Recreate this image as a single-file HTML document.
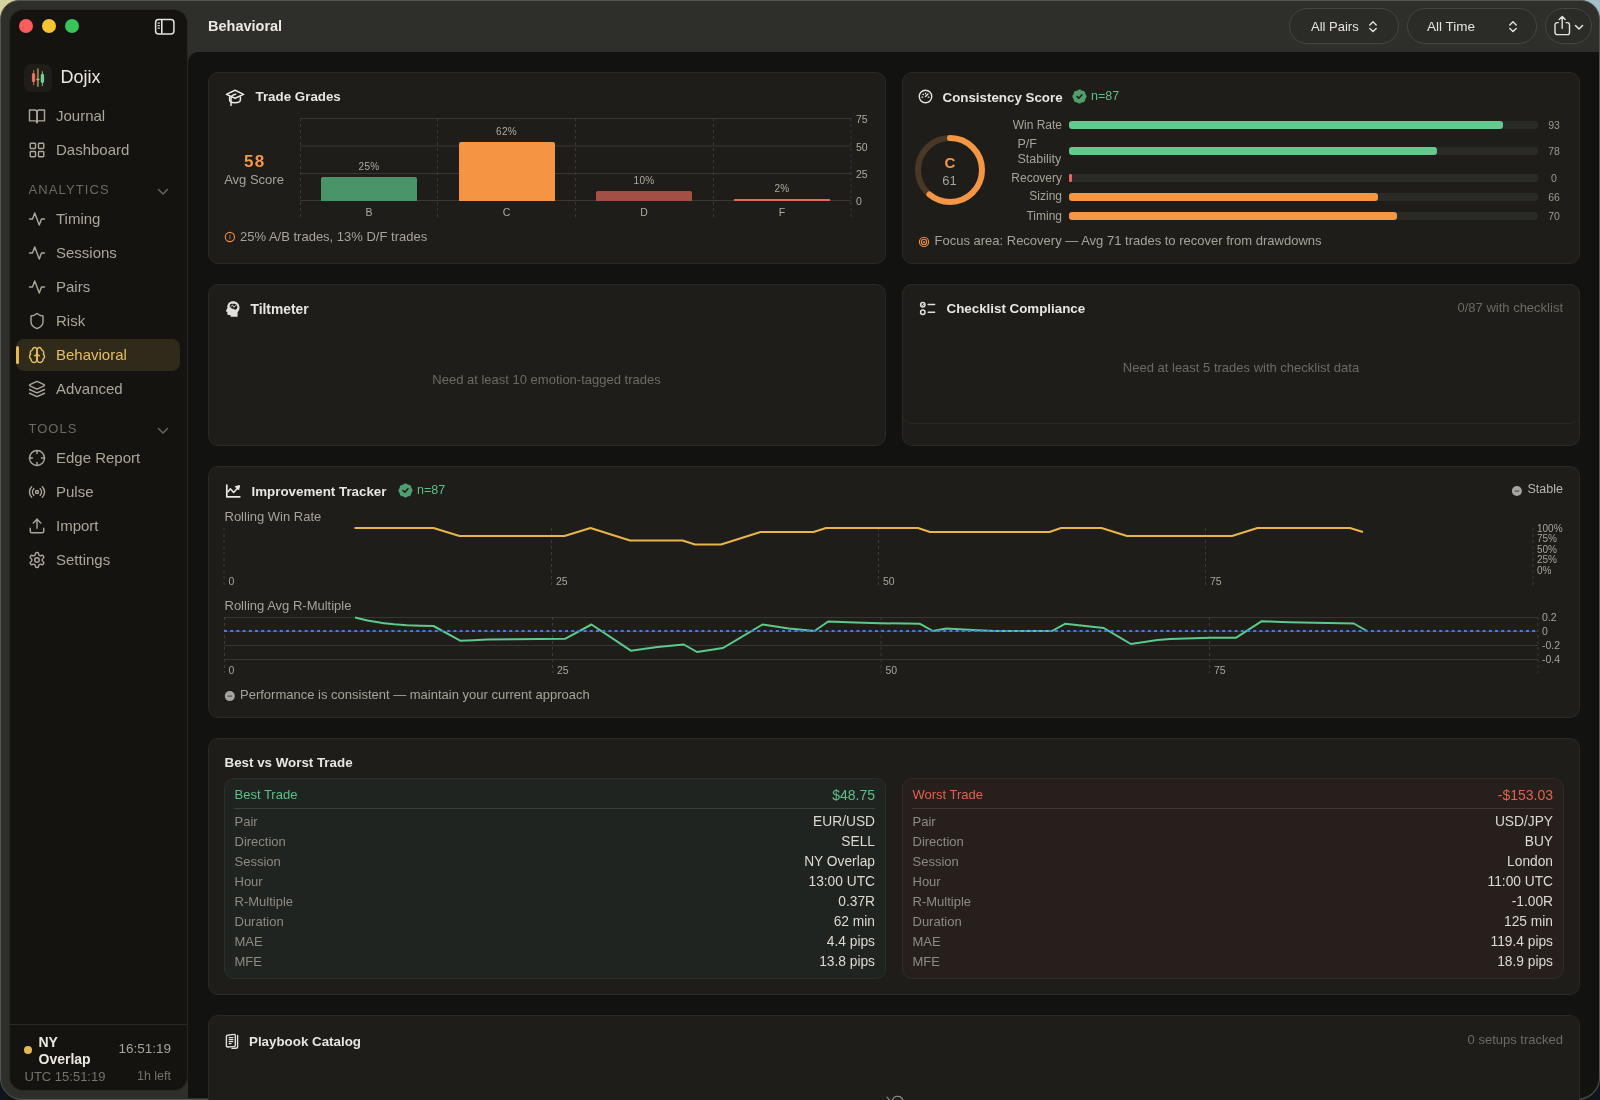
<!DOCTYPE html>
<html><head><meta charset="utf-8"><title>Dojix</title>
<style>
*{box-sizing:border-box;margin:0;padding:0}
html,body{width:1600px;height:1100px;overflow:hidden;background:#12141c;font-family:"Liberation Sans",sans-serif}
#wrap{position:absolute;left:0;top:0;width:1600px;height:1100px;will-change:transform}
.a{position:absolute;display:block}
.t{position:absolute;white-space:nowrap}
</style></head><body><div id="wrap">
<div class="a" style="left:0px;top:0px;width:40px;height:40px;background:#d8d2a2;"></div><div class="a" style="left:1560px;top:0px;width:40px;height:40px;background:#a6c0c8;"></div><div class="a" style="left:0px;top:1060px;width:40px;height:40px;background:#12141c;"></div><div class="a" style="left:1560px;top:1060px;width:40px;height:40px;background:#12141c;"></div><div class="a" style="left:0px;top:0px;width:1600px;height:1100px;background:#2e2f2b;border:1px solid #55564f;border-radius:19px 19px 22px 22px;"></div><div class="a" style="left:9px;top:9px;width:179px;height:1082px;background:#14130f;border-radius:14px;border:1px solid #29271f;"></div><div class="a" style="left:188px;top:52px;width:1411px;height:1046px;background:#121210;border-top-left-radius:10px;border-bottom-right-radius:21px;"></div><div class="a" style="left:19px;top:19px;width:14px;height:14px;background:#fc5c5a;border-radius:7px;"></div><div class="a" style="left:42px;top:19px;width:14px;height:14px;background:#f5c431;border-radius:7px;"></div><div class="a" style="left:65px;top:19px;width:14px;height:14px;background:#37c45b;border-radius:7px;"></div><svg class="a" style="left:154px;top:18px;" width="22" height="18" viewBox="0 0 22 18"><rect x="1.6" y="1.6" width="18.3" height="14.4" rx="3" fill="none" stroke="#e6e3dc" stroke-width="1.5"/><line x1="7.8" y1="2" x2="7.8" y2="15.6" stroke="#e6e3dc" stroke-width="1.6"/><rect x="3.6" y="4.5" width="2.2" height="1.2" fill="#e6e3dc"/><rect x="3.6" y="7" width="2.2" height="1.2" fill="#e6e3dc"/><rect x="3.6" y="9.5" width="2.2" height="1.2" fill="#e6e3dc"/></svg><div class="t" style="left:208px;top:18.73px;font-size:14.5px;line-height:14.5px;color:#ece9e2;font-weight:700;">Behavioral</div><div class="a" style="left:1289px;top:8px;width:110px;height:36px;background:#2b2c28;border-radius:18px;border:1px solid #45473f;"></div><div class="t" style="left:1311px;top:20.00px;font-size:13px;line-height:13px;color:#e6e3dc;">All Pairs</div><svg class="a" style="left:1365.6px;top:17.6px;" width="14" height="16" viewBox="0 0 14 16"><path d="M3.8 6.9 L7 3.8 L10.2 6.9 M3.8 10.4 L7 13.5 L10.2 10.4" fill="none" stroke="#e6e3dc" stroke-width="1.4" stroke-linecap="round" stroke-linejoin="round"/></svg><div class="a" style="left:1407px;top:8px;width:130px;height:36px;background:#2b2c28;border-radius:18px;border:1px solid #45473f;"></div><div class="t" style="left:1427px;top:19.57px;font-size:13.5px;line-height:13.5px;color:#e6e3dc;">All Time</div><svg class="a" style="left:1505.5px;top:17.6px;" width="14" height="16" viewBox="0 0 14 16"><path d="M3.8 6.9 L7 3.8 L10.2 6.9 M3.8 10.4 L7 13.5 L10.2 10.4" fill="none" stroke="#e6e3dc" stroke-width="1.4" stroke-linecap="round" stroke-linejoin="round"/></svg><div class="a" style="left:1545px;top:8px;width:47px;height:36px;background:#2b2c28;border-radius:18px;border:1px solid #45473f;"></div><svg class="a" style="left:0px;top:0px;" width="1600" height="60" viewBox="0 0 1600 60"><path d="M1558.3 22.6 H1557.2 a2.2 2.2 0 0 0 -2.2 2.2 V32.4 a2.2 2.2 0 0 0 2.2 2.2 H1567.3 a2.2 2.2 0 0 0 2.2 -2.2 V24.8 a2.2 2.2 0 0 0 -2.2 -2.2 H1566.1 M1562.2 16.8 V28.3 M1559.2 19.6 L1562.2 16.6 L1565.2 19.6" fill="none" stroke="#e6e3dc" stroke-width="1.4" stroke-linecap="round" stroke-linejoin="round"/></svg><svg class="a" style="left:1573px;top:22px;" width="12" height="10" viewBox="0 0 12 10"><path d="M2.5 3.5 L6 7 L9.5 3.5" fill="none" stroke="#e6e3dc" stroke-width="1.5" stroke-linecap="round" stroke-linejoin="round"/></svg><div class="a" style="left:24px;top:64px;width:28px;height:28px;background:#1f1d19;border-radius:7px;"></div><svg class="a" style="left:24px;top:64px;" width="28" height="28" viewBox="0 0 28 28"><rect x="9" y="5.9" width="1.2" height="15.4" rx="0.6" fill="#b5614f"/><rect x="7.9" y="9.2" width="3.3" height="8.9" rx="1.3" fill="#e5735f"/><rect x="12.9" y="4.3" width="2" height="18.6" rx="1" fill="#8f7a45"/><ellipse cx="13.9" cy="15.4" rx="1.8" ry="1" fill="#c9a652"/><rect x="17.8" y="7" width="1.2" height="15.1" rx="0.6" fill="#5aae85"/><rect x="16.75" y="10.1" width="3.35" height="8.8" rx="1.3" fill="#6ccf9c"/></svg><div class="t" style="left:60.5px;top:67.76px;font-size:18px;line-height:18px;color:#ece8df;">Dojix</div><div class="a" style="left:16px;top:339px;width:164px;height:32px;background:#302a1b;border-radius:8px;"></div><div class="a" style="left:16px;top:346px;width:3px;height:18px;background:#e8b84e;border-radius:1.5px;"></div><svg class="a" style="left:28px;top:107px;" width="18" height="18" viewBox="0 0 24 24"><g fill="none" stroke="#aca698" stroke-width="1.9" stroke-linecap="round" stroke-linejoin="round"><path d="M2 4h7a3 3 0 0 1 3 3v14a2.5 2.5 0 0 0-2.5-2.5H2z"/><path d="M22 4h-7a3 3 0 0 0-3 3v14a2.5 2.5 0 0 1 2.5-2.5H22z"/></g></svg><div class="t" style="left:56px;top:108.30px;font-size:15px;line-height:15px;color:#aca698;">Journal</div><svg class="a" style="left:28px;top:141px;" width="18" height="18" viewBox="0 0 24 24"><g fill="none" stroke="#aca698" stroke-width="1.9" stroke-linecap="round" stroke-linejoin="round"><rect x="3" y="3" width="7" height="7" rx="1"/><rect x="14" y="3" width="7" height="7" rx="1"/><rect x="3" y="14" width="7" height="7" rx="1"/><rect x="14" y="14" width="7" height="7" rx="1"/></g></svg><div class="t" style="left:56px;top:142.30px;font-size:15px;line-height:15px;color:#aca698;">Dashboard</div><svg class="a" style="left:28px;top:210px;" width="18" height="18" viewBox="0 0 24 24"><g fill="none" stroke="#aca698" stroke-width="1.9" stroke-linecap="round" stroke-linejoin="round"><path d="M22 12h-4l-3 8L9 4l-3 8H2"/></g></svg><div class="t" style="left:56px;top:211.30px;font-size:15px;line-height:15px;color:#aca698;">Timing</div><svg class="a" style="left:28px;top:244px;" width="18" height="18" viewBox="0 0 24 24"><g fill="none" stroke="#aca698" stroke-width="1.9" stroke-linecap="round" stroke-linejoin="round"><path d="M22 12h-4l-3 8L9 4l-3 8H2"/></g></svg><div class="t" style="left:56px;top:245.30px;font-size:15px;line-height:15px;color:#aca698;">Sessions</div><svg class="a" style="left:28px;top:278px;" width="18" height="18" viewBox="0 0 24 24"><g fill="none" stroke="#aca698" stroke-width="1.9" stroke-linecap="round" stroke-linejoin="round"><path d="M22 12h-4l-3 8L9 4l-3 8H2"/></g></svg><div class="t" style="left:56px;top:279.30px;font-size:15px;line-height:15px;color:#aca698;">Pairs</div><svg class="a" style="left:28px;top:312px;" width="18" height="18" viewBox="0 0 24 24"><g fill="none" stroke="#aca698" stroke-width="1.9" stroke-linecap="round" stroke-linejoin="round"><path d="M20 13c0 5-3.5 7.5-7.66 8.95a1 1 0 0 1-.67-.01C7.5 20.5 4 18 4 13V6a1 1 0 0 1 1-1c2 0 4.5-1.2 6.24-2.72a1.17 1.17 0 0 1 1.52 0C14.51 3.81 17 5 19 5a1 1 0 0 1 1 1z"/></g></svg><div class="t" style="left:56px;top:313.30px;font-size:15px;line-height:15px;color:#aca698;">Risk</div><svg class="a" style="left:28px;top:346px;" width="18" height="18" viewBox="0 0 24 24"><g fill="none" stroke="#e8bf5e" stroke-width="1.9" stroke-linecap="round" stroke-linejoin="round"><path d="M12 5a3 3 0 1 0-5.997.125 4 4 0 0 0-2.526 5.77 4 4 0 0 0 .556 6.588A4 4 0 1 0 12 18Z"/><path d="M12 5a3 3 0 1 1 5.997.125 4 4 0 0 1 2.526 5.77 4 4 0 0 1-.556 6.588A4 4 0 1 1 12 18Z"/><path d="M15 13a4.5 4.5 0 0 1-3-4 4.5 4.5 0 0 1-3 4"/><path d="M12 18V9"/></g></svg><div class="t" style="left:56px;top:347.30px;font-size:15px;line-height:15px;color:#e8bf5e;">Behavioral</div><svg class="a" style="left:28px;top:380px;" width="18" height="18" viewBox="0 0 24 24"><g fill="none" stroke="#aca698" stroke-width="1.9" stroke-linecap="round" stroke-linejoin="round"><path d="m12.83 2.18a2 2 0 0 0-1.66 0L2.6 6.08a1 1 0 0 0 0 1.83l8.58 3.91a2 2 0 0 0 1.66 0l8.58-3.9a1 1 0 0 0 0-1.83Z"/><path d="m22 17.65-9.17 4.16a2 2 0 0 1-1.66 0L2 17.65"/><path d="m22 12.65-9.17 4.16a2 2 0 0 1-1.66 0L2 12.65"/></g></svg><div class="t" style="left:56px;top:381.30px;font-size:15px;line-height:15px;color:#aca698;">Advanced</div><svg class="a" style="left:28px;top:449px;" width="18" height="18" viewBox="0 0 24 24"><g fill="none" stroke="#aca698" stroke-width="1.9" stroke-linecap="round" stroke-linejoin="round"><circle cx="12" cy="12" r="10"/><line x1="22" y1="12" x2="18" y2="12"/><line x1="6" y1="12" x2="2" y2="12"/><line x1="12" y1="6" x2="12" y2="2"/><line x1="12" y1="22" x2="12" y2="18"/></g></svg><div class="t" style="left:56px;top:450.30px;font-size:15px;line-height:15px;color:#aca698;">Edge Report</div><svg class="a" style="left:28px;top:483px;" width="18" height="18" viewBox="0 0 24 24"><g fill="none" stroke="#aca698" stroke-width="1.9" stroke-linecap="round" stroke-linejoin="round"><path d="M4.9 19.1C1 15.2 1 8.8 4.9 4.9"/><path d="M7.8 16.2c-2.3-2.3-2.3-6.1 0-8.5"/><circle cx="12" cy="12" r="2"/><path d="M16.2 7.8c2.3 2.3 2.3 6.1 0 8.5"/><path d="M19.1 4.9C23 8.8 23 15.1 19.1 19"/></g></svg><div class="t" style="left:56px;top:484.30px;font-size:15px;line-height:15px;color:#aca698;">Pulse</div><svg class="a" style="left:28px;top:517px;" width="18" height="18" viewBox="0 0 24 24"><g fill="none" stroke="#aca698" stroke-width="1.9" stroke-linecap="round" stroke-linejoin="round"><path d="M21 15v4a2 2 0 0 1-2 2H5a2 2 0 0 1-2-2v-4"/><polyline points="17 8 12 3 7 8"/><line x1="12" y1="3" x2="12" y2="15"/></g></svg><div class="t" style="left:56px;top:518.30px;font-size:15px;line-height:15px;color:#aca698;">Import</div><svg class="a" style="left:28px;top:551px;" width="18" height="18" viewBox="0 0 24 24"><g fill="none" stroke="#aca698" stroke-width="1.9" stroke-linecap="round" stroke-linejoin="round"><path d="M12.22 2h-.44a2 2 0 0 0-2 2v.18a2 2 0 0 1-1 1.73l-.43.25a2 2 0 0 1-2 0l-.15-.08a2 2 0 0 0-2.73.73l-.22.38a2 2 0 0 0 .73 2.73l.15.1a2 2 0 0 1 1 1.72v.51a2 2 0 0 1-1 1.74l-.15.09a2 2 0 0 0-.73 2.73l.22.38a2 2 0 0 0 2.73.73l.15-.08a2 2 0 0 1 2 0l.43.25a2 2 0 0 1 1 1.73V20a2 2 0 0 0 2 2h.44a2 2 0 0 0 2-2v-.18a2 2 0 0 1 1-1.73l.43-.25a2 2 0 0 1 2 0l.15.08a2 2 0 0 0 2.73-.73l.22-.39a2 2 0 0 0-.73-2.73l-.15-.08a2 2 0 0 1-1-1.74v-.5a2 2 0 0 1 1-1.74l.15-.09a2 2 0 0 0 .73-2.73l-.22-.38a2 2 0 0 0-2.73-.73l-.15.08a2 2 0 0 1-2 0l-.43-.25a2 2 0 0 1-1-1.73V4a2 2 0 0 0-2-2z"/><circle cx="12" cy="12" r="3"/></g></svg><div class="t" style="left:56px;top:552.30px;font-size:15px;line-height:15px;color:#aca698;">Settings</div><div class="t" style="left:28.5px;top:183.00px;font-size:13px;line-height:13px;color:#6f6a60;letter-spacing:1.1px;">ANALYTICS</div><div class="t" style="left:28.5px;top:422.00px;font-size:13px;line-height:13px;color:#6f6a60;letter-spacing:1px;">TOOLS</div><svg class="a" style="left:157px;top:188px;" width="12" height="8" viewBox="0 0 12 8"><path d="M1.5 1.5 L6 6 L10.5 1.5" fill="none" stroke="#6f6a60" stroke-width="1.4" stroke-linecap="round" stroke-linejoin="round"/></svg><svg class="a" style="left:157px;top:427px;" width="12" height="8" viewBox="0 0 12 8"><path d="M1.5 1.5 L6 6 L10.5 1.5" fill="none" stroke="#6f6a60" stroke-width="1.4" stroke-linecap="round" stroke-linejoin="round"/></svg><div class="a" style="left:9px;top:1024px;width:179px;height:1px;background:#2a2822;"></div><div class="a" style="left:24px;top:1046px;width:8px;height:8px;background:#e8b84e;border-radius:4px;"></div><div class="t" style="left:38.5px;top:1034.95px;font-size:14px;line-height:14px;color:#ece8df;font-weight:700;">NY</div><div class="t" style="left:38.5px;top:1051.65px;font-size:14px;line-height:14px;color:#ece8df;font-weight:700;">Overlap</div><div class="t" style="right:1429px;text-align:right;top:1042.17px;font-size:13.5px;line-height:13.5px;color:#a8a398;">16:51:19</div><div class="t" style="left:24.5px;top:1069.50px;font-size:13px;line-height:13px;color:#77726a;">UTC 15:51:19</div><div class="t" style="right:1429px;text-align:right;top:1069.92px;font-size:12.5px;line-height:12.5px;color:#77726a;">1h left</div><div class="a" style="left:208px;top:72px;width:678px;height:192px;background:#1e1d19;border-radius:10px;border:1px solid #2b2923;"></div><svg class="a" style="left:0px;top:0px;" width="260" height="120" viewBox="0 0 260 120"><g fill="none" stroke="#ece9e2" stroke-width="1.5" stroke-linecap="round" stroke-linejoin="round"><path d="M226.4 94.4 L235 90.3 L243.6 94.4 L235 98.3 Z"/><path d="M229.6 96.9 V99.8 C229.6 101.6 232 102.8 235 102.8 C238 102.8 240.4 101.6 240.4 99.8 V96.9"/><path d="M235.6 94.3 C233.4 94.8 231 96 231 98.6 V105.4"/></g></svg><div class="t" style="left:255.5px;top:89.70px;font-size:13.35px;line-height:13.35px;color:#e8e6e0;font-weight:700;">Trade Grades</div><div class="t" style="left:-45.19999999999999px;width:600px;text-align:center;top:153.01px;font-size:17px;line-height:17px;color:#f59644;font-weight:700;letter-spacing:1.4px;">58</div><div class="t" style="left:-46px;width:600px;text-align:center;top:172.50px;font-size:13px;line-height:13px;color:#a8a398;">Avg Score</div><svg class="a" style="left:0px;top:0px;" width="900" height="240" viewBox="0 0 900 240"><line x1="300" y1="118.5" x2="851" y2="118.5" stroke="#3a3833" stroke-width="1"/><line x1="300" y1="146" x2="851" y2="146" stroke="#3a3833" stroke-width="1"/><line x1="300" y1="173.5" x2="851" y2="173.5" stroke="#3a3833" stroke-width="1"/><line x1="300" y1="200.5" x2="851" y2="200.5" stroke="#3a3833" stroke-width="1"/><line x1="300.5" y1="118" x2="300.5" y2="218" stroke="#3a3833" stroke-width="1" stroke-dasharray="3 3"/><line x1="437.5" y1="118" x2="437.5" y2="218" stroke="#3a3833" stroke-width="1" stroke-dasharray="3 3"/><line x1="575.5" y1="118" x2="575.5" y2="218" stroke="#3a3833" stroke-width="1" stroke-dasharray="3 3"/><line x1="713.5" y1="118" x2="713.5" y2="218" stroke="#3a3833" stroke-width="1" stroke-dasharray="3 3"/><line x1="851" y1="118" x2="851" y2="218" stroke="#3a3833" stroke-width="1" stroke-dasharray="3 3"/><path d="M321 201 V179 a2 2 0 0 1 2 -2 H415 a2 2 0 0 1 2 2 V201 Z" fill="#4a946a"/><path d="M459 201 V144 a2 2 0 0 1 2 -2 H553 a2 2 0 0 1 2 2 V201 Z" fill="#f59543"/><path d="M596 201 V193 a2 2 0 0 1 2 -2 H690 a2 2 0 0 1 2 2 V201 Z" fill="#a44f45"/><rect x="734" y="199" width="96" height="2" fill="#e5685a"/></svg><div class="t" style="left:69px;width:600px;text-align:center;top:161.53px;font-size:10px;line-height:10px;color:#b1ab9f;letter-spacing:0.3px;">25%</div><div class="t" style="left:206.5px;width:600px;text-align:center;top:126.53px;font-size:10px;line-height:10px;color:#b1ab9f;letter-spacing:0.3px;">62%</div><div class="t" style="left:344px;width:600px;text-align:center;top:175.53px;font-size:10px;line-height:10px;color:#b1ab9f;letter-spacing:0.3px;">10%</div><div class="t" style="left:482px;width:600px;text-align:center;top:183.53px;font-size:10px;line-height:10px;color:#b1ab9f;letter-spacing:0.3px;">2%</div><div class="t" style="left:69px;width:600px;text-align:center;top:207.11px;font-size:10.5px;line-height:10.5px;color:#b1ab9f;">B</div><div class="t" style="left:206.5px;width:600px;text-align:center;top:207.11px;font-size:10.5px;line-height:10.5px;color:#b1ab9f;">C</div><div class="t" style="left:344px;width:600px;text-align:center;top:207.11px;font-size:10.5px;line-height:10.5px;color:#b1ab9f;">D</div><div class="t" style="left:482px;width:600px;text-align:center;top:207.11px;font-size:10.5px;line-height:10.5px;color:#b1ab9f;">F</div><div class="t" style="left:856px;top:114.11px;font-size:10.5px;line-height:10.5px;color:#b1ab9f;">75</div><div class="t" style="left:856px;top:141.61px;font-size:10.5px;line-height:10.5px;color:#b1ab9f;">50</div><div class="t" style="left:856px;top:169.11px;font-size:10.5px;line-height:10.5px;color:#b1ab9f;">25</div><div class="t" style="left:856px;top:196.11px;font-size:10.5px;line-height:10.5px;color:#b1ab9f;">0</div><svg class="a" style="left:0px;top:0px;" width="260" height="260" viewBox="0 0 260 260"><circle cx="229.9" cy="237" r="4.6" fill="none" stroke="#f08a3c" stroke-width="1.15"/><rect x="229.3" y="234.6" width="1.3" height="4.8" fill="#8c5a2c"/></svg><div class="t" style="left:240px;top:230.00px;font-size:13px;line-height:13px;color:#a8a398;">25% A/B trades, 13% D/F trades</div><div class="a" style="left:902px;top:72px;width:678px;height:192px;background:#1e1d19;border-radius:10px;border:1px solid #2b2923;"></div><svg class="a" style="left:918px;top:89px;" width="15" height="15" viewBox="0 0 24 24"><g fill="none" stroke="#e8e6e0" stroke-width="2.2" stroke-linecap="round" stroke-linejoin="round"><circle cx="12" cy="12" r="10"/><path d="M12 12 L16 8"/><path d="M6.5 13 h1 M8 8.5 l.5 .5 M12 6.5 v1 M17.5 13 h-1"/></g></svg><div class="t" style="left:942.5px;top:90.70px;font-size:13.35px;line-height:13.35px;color:#e8e6e0;font-weight:700;">Consistency Score</div><svg class="a" style="left:1071px;top:88px;" width="17" height="17" viewBox="0 0 24 24"><path d="M3.85 8.62a4 4 0 0 1 4.78-4.77 4 4 0 0 1 6.74 0 4 4 0 0 1 4.78 4.78 4 4 0 0 1 0 6.74 4 4 0 0 1-4.77 4.78 4 4 0 0 1-6.75 0 4 4 0 0 1-4.78-4.77 4 4 0 0 1 0-6.76Z" fill="#4f9e6c"/><path d="m8.5 12 2.5 2.5 4.5-5" fill="none" stroke="#1e1d19" stroke-width="2.2" stroke-linecap="round" stroke-linejoin="round"/></svg><div class="t" style="left:1091px;top:89.92px;font-size:12.5px;line-height:12.5px;color:#5fbf86;">n=87</div><svg class="a" style="left:912px;top:132px;" width="76" height="76" viewBox="0 0 76 76"><circle cx="38" cy="38" r="32" fill="none" stroke="#4a3826" stroke-width="6"/><circle cx="38" cy="38" r="32" fill="none" stroke="#f59644" stroke-width="6" stroke-linecap="round" stroke-dasharray="122.65 201.06" transform="rotate(-90 38 38)"/></svg><div class="t" style="left:650px;width:600px;text-align:center;top:155.10px;font-size:15px;line-height:15px;color:#f59644;font-weight:700;">C</div><div class="t" style="left:649.5px;width:600px;text-align:center;top:174.00px;font-size:13px;line-height:13px;color:#a8a398;">61</div><div class="t" style="right:538px;text-align:right;top:118.84px;font-size:12px;line-height:12px;color:#a8a398;">Win Rate</div><div class="t" style="right:538px;text-align:right;top:171.84px;font-size:12px;line-height:12px;color:#a8a398;">Recovery</div><div class="t" style="right:538px;text-align:right;top:190.34px;font-size:12px;line-height:12px;color:#a8a398;">Sizing</div><div class="t" style="right:538px;text-align:right;top:209.84px;font-size:12px;line-height:12px;color:#a8a398;">Timing</div><div class="a" style="left:1069px;top:121px;width:469px;height:8px;background:#2a2a26;border-radius:3px;"></div><div class="a" style="left:1069px;top:121px;width:434px;height:8px;background:#63c98f;border-radius:3px;"></div><div class="t" style="left:1254px;width:600px;text-align:center;top:120.05px;font-size:10.5px;line-height:10.5px;color:#9c988e;font-family:"Liberation Mono",monospace;">93</div><div class="a" style="left:1069px;top:174px;width:469px;height:8px;background:#2a2a26;border-radius:3px;"></div><div class="a" style="left:1069px;top:174px;width:3px;height:8px;background:#e5685a;border-radius:1px;"></div><div class="t" style="left:1254px;width:600px;text-align:center;top:173.25px;font-size:10.5px;line-height:10.5px;color:#9c988e;font-family:"Liberation Mono",monospace;">0</div><div class="a" style="left:1069px;top:193px;width:469px;height:8px;background:#2a2a26;border-radius:3px;"></div><div class="a" style="left:1069px;top:193px;width:309px;height:8px;background:#f59644;border-radius:3px;"></div><div class="t" style="left:1254px;width:600px;text-align:center;top:192.05px;font-size:10.5px;line-height:10.5px;color:#9c988e;font-family:"Liberation Mono",monospace;">66</div><div class="a" style="left:1069px;top:212px;width:469px;height:8px;background:#2a2a26;border-radius:3px;"></div><div class="a" style="left:1069px;top:212px;width:328px;height:8px;background:#f59644;border-radius:3px;"></div><div class="t" style="left:1254px;width:600px;text-align:center;top:211.05px;font-size:10.5px;line-height:10.5px;color:#9c988e;font-family:"Liberation Mono",monospace;">70</div><div class="a" style="left:1069px;top:147px;width:469px;height:8px;background:#2a2a26;border-radius:3px;"></div><div class="a" style="left:1069px;top:147px;width:368px;height:8px;background:#63c98f;border-radius:3px;"></div><div class="t" style="left:1254px;width:600px;text-align:center;top:146.25px;font-size:10.5px;line-height:10.5px;color:#9c988e;font-family:"Liberation Mono",monospace;">78</div><div class="t" style="left:1017.5px;top:138.22px;font-size:12.5px;line-height:12.5px;color:#a8a398;">P/F</div><div class="t" style="left:1017.5px;top:152.62px;font-size:12.5px;line-height:12.5px;color:#a8a398;">Stability</div><svg class="a" style="left:0px;top:0px;" width="960" height="260" viewBox="0 0 960 260"><g fill="none" stroke="#f29040" stroke-width="1.15"><circle cx="924" cy="241.9" r="4.6"/><circle cx="924" cy="241.9" r="2.6"/></g><circle cx="924" cy="241.9" r="1" fill="#f59644"/></svg><div class="t" style="left:934.5px;top:233.50px;font-size:13px;line-height:13px;color:#a8a398;">Focus area: Recovery — Avg 71 trades to recover from drawdowns</div><div class="a" style="left:208px;top:284px;width:678px;height:162px;background:#1e1d19;border-radius:10px;border:1px solid #2b2923;"></div><svg class="a" style="left:0px;top:0px;" width="260" height="330" viewBox="0 0 260 330"><path d="M233 301.3 C236.8 301.3 239.5 304 239.5 307.5 C239.5 309.5 238.7 311 237.6 312.2 L237.6 316.8 L230.6 316.8 L230.4 315 L228.6 315 C227.6 315 227.3 314.2 227.3 313.4 L227.3 312 L226.2 311.4 C225.8 311.1 225.9 310.6 226.2 310.2 L227.3 308.6 L227.3 307 C227.3 303.6 229.8 301.3 233 301.3 Z" fill="#e2e0da"/><path d="M229.8 305.2 C230.3 303.9 231.8 303.5 232.8 303.9 C234.3 303.3 236.2 304 236.8 305.4 C237.6 306.2 237.5 308 236.6 308.9 C235.9 309.9 234.3 309.7 233.7 309 C232.6 308.7 231.2 308.2 230.5 307.4 C229.7 306.8 229.5 305.9 229.8 305.2 Z" fill="#1e1d19"/><path d="M230.8 306.6 L232.6 305 L233.8 307.2 L235.8 305.6" fill="none" stroke="#e2e0da" stroke-width="0.9" stroke-linecap="round" stroke-linejoin="round"/></svg><div class="t" style="left:250.5px;top:302.92px;font-size:13.8px;line-height:13.8px;color:#e8e6e0;font-weight:700;">Tiltmeter</div><div class="t" style="left:246.5px;width:600px;text-align:center;top:372.50px;font-size:13px;line-height:13px;color:#6e6a61;">Need at least 10 emotion-tagged trades</div><div class="a" style="left:902px;top:284px;width:678px;height:162px;background:#1e1d19;border-radius:10px;border:1px solid #2b2923;"></div><div class="a" style="left:902px;top:284px;width:678px;height:140px;background:transparent;border-radius:10px;border:1px solid #2b2923;"></div><svg class="a" style="left:0px;top:0px;" width="960" height="330" viewBox="0 0 960 330"><g fill="none" stroke="#e2e0da" stroke-width="1.5" stroke-linecap="round"><circle cx="922.8" cy="304.8" r="2.2"/><circle cx="922.8" cy="312.2" r="2.2"/><path d="M928.2 304.6 H934.6 M928.2 312.2 H934.6"/><path d="M921.8 304.9 L922.6 305.6 L924 303.9" stroke-width="1"/></g></svg><div class="t" style="left:946.5px;top:301.70px;font-size:13.35px;line-height:13.35px;color:#e8e6e0;font-weight:700;">Checklist Compliance</div><div class="t" style="right:37px;text-align:right;top:301.00px;font-size:13px;line-height:13px;color:#6e6a61;">0/87 with checklist</div><div class="t" style="left:941px;width:600px;text-align:center;top:361.00px;font-size:13px;line-height:13px;color:#6e6a61;">Need at least 5 trades with checklist data</div><div class="a" style="left:208px;top:466px;width:1372px;height:252px;background:#1e1d19;border-radius:10px;border:1px solid #2b2923;"></div><svg class="a" style="left:0px;top:0px;" width="260" height="520" viewBox="0 0 260 520"><path d="M226.8 485 V496.8 H239.8" fill="none" stroke="#ece9e2" stroke-width="1.7" stroke-linecap="round" stroke-linejoin="round"/><path d="M228 491.8 L230.4 488.8 L233.6 492.4 L237.2 488.6" fill="none" stroke="#ece9e2" stroke-width="1.5" stroke-linecap="round" stroke-linejoin="round"/><path d="M235.2 486.6 L239.6 485.6 L238.6 490 Z" fill="#ece9e2" stroke="#ece9e2" stroke-width="1" stroke-linejoin="round"/></svg><div class="t" style="left:251.5px;top:484.70px;font-size:13.35px;line-height:13.35px;color:#e8e6e0;font-weight:700;">Improvement Tracker</div><svg class="a" style="left:397px;top:482px;" width="17" height="17" viewBox="0 0 24 24"><path d="M3.85 8.62a4 4 0 0 1 4.78-4.77 4 4 0 0 1 6.74 0 4 4 0 0 1 4.78 4.78 4 4 0 0 1 0 6.74 4 4 0 0 1-4.77 4.78 4 4 0 0 1-6.75 0 4 4 0 0 1-4.78-4.77 4 4 0 0 1 0-6.76Z" fill="#4f9e6c"/><path d="m8.5 12 2.5 2.5 4.5-5" fill="none" stroke="#1e1d19" stroke-width="2.2" stroke-linecap="round" stroke-linejoin="round"/></svg><div class="t" style="left:417px;top:484.22px;font-size:12.5px;line-height:12.5px;color:#5fbf86;">n=87</div><svg class="a" style="left:0px;top:0px;" width="1600" height="720" viewBox="0 0 1600 720"><circle cx="1516.9" cy="491" r="5" fill="#a6a5a1"/><rect x="1514.6" y="490.2" width="4.6" height="1.7" fill="#6a6966"/><circle cx="229.8" cy="696.1" r="5" fill="#a6a5a1"/><rect x="227.5" y="695.3" width="4.6" height="1.7" fill="#6a6966"/></svg><div class="t" style="left:1527.5px;top:482.92px;font-size:12.5px;line-height:12.5px;color:#bab7af;">Stable</div><div class="t" style="left:224.5px;top:510.00px;font-size:13px;line-height:13px;color:#a8a398;">Rolling Win Rate</div><div class="t" style="left:224.5px;top:598.50px;font-size:13px;line-height:13px;color:#a8a398;">Rolling Avg R-Multiple</div><svg class="a" style="left:0px;top:0px;" width="1600" height="720" viewBox="0 0 1600 720"><line x1="224" y1="528" x2="224" y2="586" stroke="#3d3b36" stroke-width="1" stroke-dasharray="3 3"/><line x1="551.5" y1="528" x2="551.5" y2="586" stroke="#3d3b36" stroke-width="1" stroke-dasharray="3 3"/><line x1="878.5" y1="528" x2="878.5" y2="586" stroke="#3d3b36" stroke-width="1" stroke-dasharray="3 3"/><line x1="1205.5" y1="528" x2="1205.5" y2="586" stroke="#3d3b36" stroke-width="1" stroke-dasharray="3 3"/><line x1="1533" y1="528" x2="1533" y2="586" stroke="#3d3b36" stroke-width="1" stroke-dasharray="3 3"/><line x1="224" y1="617.5" x2="1538" y2="617.5" stroke="#383632" stroke-width="1"/><line x1="224" y1="631.5" x2="1538" y2="631.5" stroke="#383632" stroke-width="1"/><line x1="224" y1="645.5" x2="1538" y2="645.5" stroke="#383632" stroke-width="1"/><line x1="224" y1="659.5" x2="1538" y2="659.5" stroke="#383632" stroke-width="1"/><line x1="224.5" y1="617" x2="224.5" y2="673" stroke="#3d3b36" stroke-width="1" stroke-dasharray="3 3"/><line x1="552.5" y1="617" x2="552.5" y2="673" stroke="#3d3b36" stroke-width="1" stroke-dasharray="3 3"/><line x1="881" y1="617" x2="881" y2="673" stroke="#3d3b36" stroke-width="1" stroke-dasharray="3 3"/><line x1="1209.5" y1="617" x2="1209.5" y2="673" stroke="#3d3b36" stroke-width="1" stroke-dasharray="3 3"/><line x1="1538" y1="617" x2="1538" y2="673" stroke="#3d3b36" stroke-width="1" stroke-dasharray="3 3"/><polyline points="354.5,528 433.5,528 459.5,536 564.5,536 590.5,528 630,540.5 682.5,540.5 695,544.5 721,544.5 760.5,532 813.5,532 826,528 918,528 930,532 1049.5,532 1061,528 1101.5,528 1127,536 1232,536 1257.5,528 1350,528 1363,532" fill="none" stroke="#e8b44c" stroke-width="2" stroke-linejoin="round"/><polyline points="355,617.5 367.5,620.5 381,622.8 394,624.3 407,625.2 420,625.7 433.5,626 460.5,640.8 473.5,640.2 487,639.6 565,638.8 591.5,624.5 631.2,650.8 657.5,647 683.8,644.5 697,652 723,648 762.5,624.5 788.8,628.5 814.5,631 828.2,621.5 855,622.5 880,623.2 920,623.8 933,631 946.2,628.5 972.5,630 995,631 1052,631 1065,623.8 1103.8,628 1130.8,644 1157.5,640 1170,639 1210,637.8 1235.8,637.8 1261.8,621.2 1288.8,622.2 1353.8,623.5 1367,631" fill="none" stroke="#5cc98e" stroke-width="2" stroke-linejoin="round"/><line x1="224" y1="631" x2="1538" y2="631" stroke="#3d7cf0" stroke-width="2" stroke-dasharray="3 3.2"/></svg><div class="t" style="left:228.5px;top:576.11px;font-size:10.5px;line-height:10.5px;color:#a9a499;">0</div><div class="t" style="left:556px;top:576.11px;font-size:10.5px;line-height:10.5px;color:#a9a499;">25</div><div class="t" style="left:883px;top:576.11px;font-size:10.5px;line-height:10.5px;color:#a9a499;">50</div><div class="t" style="left:1210px;top:576.11px;font-size:10.5px;line-height:10.5px;color:#a9a499;">75</div><div class="t" style="left:228.5px;top:665.11px;font-size:10.5px;line-height:10.5px;color:#a9a499;">0</div><div class="t" style="left:557px;top:665.11px;font-size:10.5px;line-height:10.5px;color:#a9a499;">25</div><div class="t" style="left:885.5px;top:665.11px;font-size:10.5px;line-height:10.5px;color:#a9a499;">50</div><div class="t" style="left:1214px;top:665.11px;font-size:10.5px;line-height:10.5px;color:#a9a499;">75</div><div class="t" style="left:1537px;top:524.03px;font-size:10px;line-height:10px;color:#a9a499;">100%</div><div class="t" style="left:1537px;top:534.03px;font-size:10px;line-height:10px;color:#a9a499;">75%</div><div class="t" style="left:1537px;top:544.74px;font-size:10px;line-height:10px;color:#a9a499;">50%</div><div class="t" style="left:1537px;top:555.24px;font-size:10px;line-height:10px;color:#a9a499;">25%</div><div class="t" style="left:1537px;top:565.74px;font-size:10px;line-height:10px;color:#a9a499;">0%</div><div class="t" style="left:1542px;top:612.11px;font-size:10.5px;line-height:10.5px;color:#a9a499;">0.2</div><div class="t" style="left:1542px;top:626.11px;font-size:10.5px;line-height:10.5px;color:#a9a499;">0</div><div class="t" style="left:1542px;top:640.11px;font-size:10.5px;line-height:10.5px;color:#a9a499;">-0.2</div><div class="t" style="left:1542px;top:654.11px;font-size:10.5px;line-height:10.5px;color:#a9a499;">-0.4</div><div class="t" style="left:240px;top:688.00px;font-size:13px;line-height:13px;color:#a8a398;">Performance is consistent — maintain your current approach</div><div class="a" style="left:208px;top:738px;width:1372px;height:257px;background:#1e1d19;border-radius:10px;border:1px solid #2b2923;"></div><div class="t" style="left:224.5px;top:756.20px;font-size:13.35px;line-height:13.35px;color:#e8e6e0;font-weight:700;">Best vs Worst Trade</div><div class="a" style="left:224px;top:778px;width:662px;height:201px;background:#202420;border-radius:10px;border:1px solid #2e2f28;"></div><div class="a" style="left:902px;top:778px;width:662px;height:201px;background:#271f1c;border-radius:10px;border:1px solid #332b25;"></div><div class="a" style="left:234px;top:808px;width:641px;height:1px;background:#3b403b;"></div><div class="a" style="left:912px;top:808px;width:641px;height:1px;background:#403634;"></div><div class="t" style="left:234.5px;top:787.80px;font-size:13px;line-height:13px;color:#5cc08a;">Best Trade</div><div class="t" style="right:725px;text-align:right;top:787.65px;font-size:14px;line-height:14px;color:#5cc08a;">$48.75</div><div class="t" style="left:912.5px;top:787.80px;font-size:13px;line-height:13px;color:#e0624e;">Worst Trade</div><div class="t" style="right:47px;text-align:right;top:787.65px;font-size:14px;line-height:14px;color:#e0624e;">-$153.03</div><div class="t" style="left:234.5px;top:815.25px;font-size:13px;line-height:13px;color:#8e8a80;">Pair</div><div class="t" style="right:725px;text-align:right;top:814.61px;font-size:13.75px;line-height:13.75px;color:#dedad2;">EUR/USD</div><div class="t" style="left:912.5px;top:815.25px;font-size:13px;line-height:13px;color:#8e8a80;">Pair</div><div class="t" style="right:47px;text-align:right;top:814.61px;font-size:13.75px;line-height:13.75px;color:#dedad2;">USD/JPY</div><div class="t" style="left:234.5px;top:835.25px;font-size:13px;line-height:13px;color:#8e8a80;">Direction</div><div class="t" style="right:725px;text-align:right;top:834.61px;font-size:13.75px;line-height:13.75px;color:#dedad2;">SELL</div><div class="t" style="left:912.5px;top:835.25px;font-size:13px;line-height:13px;color:#8e8a80;">Direction</div><div class="t" style="right:47px;text-align:right;top:834.61px;font-size:13.75px;line-height:13.75px;color:#dedad2;">BUY</div><div class="t" style="left:234.5px;top:855.25px;font-size:13px;line-height:13px;color:#8e8a80;">Session</div><div class="t" style="right:725px;text-align:right;top:854.61px;font-size:13.75px;line-height:13.75px;color:#dedad2;">NY Overlap</div><div class="t" style="left:912.5px;top:855.25px;font-size:13px;line-height:13px;color:#8e8a80;">Session</div><div class="t" style="right:47px;text-align:right;top:854.61px;font-size:13.75px;line-height:13.75px;color:#dedad2;">London</div><div class="t" style="left:234.5px;top:875.25px;font-size:13px;line-height:13px;color:#8e8a80;">Hour</div><div class="t" style="right:725px;text-align:right;top:874.61px;font-size:13.75px;line-height:13.75px;color:#dedad2;">13:00 UTC</div><div class="t" style="left:912.5px;top:875.25px;font-size:13px;line-height:13px;color:#8e8a80;">Hour</div><div class="t" style="right:47px;text-align:right;top:874.61px;font-size:13.75px;line-height:13.75px;color:#dedad2;">11:00 UTC</div><div class="t" style="left:234.5px;top:895.25px;font-size:13px;line-height:13px;color:#8e8a80;">R-Multiple</div><div class="t" style="right:725px;text-align:right;top:894.61px;font-size:13.75px;line-height:13.75px;color:#dedad2;">0.37R</div><div class="t" style="left:912.5px;top:895.25px;font-size:13px;line-height:13px;color:#8e8a80;">R-Multiple</div><div class="t" style="right:47px;text-align:right;top:894.61px;font-size:13.75px;line-height:13.75px;color:#dedad2;">-1.00R</div><div class="t" style="left:234.5px;top:915.25px;font-size:13px;line-height:13px;color:#8e8a80;">Duration</div><div class="t" style="right:725px;text-align:right;top:914.61px;font-size:13.75px;line-height:13.75px;color:#dedad2;">62 min</div><div class="t" style="left:912.5px;top:915.25px;font-size:13px;line-height:13px;color:#8e8a80;">Duration</div><div class="t" style="right:47px;text-align:right;top:914.61px;font-size:13.75px;line-height:13.75px;color:#dedad2;">125 min</div><div class="t" style="left:234.5px;top:935.25px;font-size:13px;line-height:13px;color:#8e8a80;">MAE</div><div class="t" style="right:725px;text-align:right;top:934.61px;font-size:13.75px;line-height:13.75px;color:#dedad2;">4.4 pips</div><div class="t" style="left:912.5px;top:935.25px;font-size:13px;line-height:13px;color:#8e8a80;">MAE</div><div class="t" style="right:47px;text-align:right;top:934.61px;font-size:13.75px;line-height:13.75px;color:#dedad2;">119.4 pips</div><div class="t" style="left:234.5px;top:955.25px;font-size:13px;line-height:13px;color:#8e8a80;">MFE</div><div class="t" style="right:725px;text-align:right;top:954.61px;font-size:13.75px;line-height:13.75px;color:#dedad2;">13.8 pips</div><div class="t" style="left:912.5px;top:955.25px;font-size:13px;line-height:13px;color:#8e8a80;">MFE</div><div class="t" style="right:47px;text-align:right;top:954.61px;font-size:13.75px;line-height:13.75px;color:#dedad2;">18.9 pips</div><div class="a" style="left:208px;top:1015px;width:1372px;height:120px;background:#1e1d19;border-radius:10px;border:1px solid #2b2923;"></div><svg class="a" style="left:0px;top:0px;" width="260" height="1100" viewBox="0 0 260 1100"><g fill="none" stroke="#e2e0da" stroke-width="1.4" stroke-linecap="round" stroke-linejoin="round"><path d="M227.6 1035.3 L234 1034.4 Q235.3 1034.3 235.3 1035.6 V1045.3 Q235.3 1046.5 234 1046.6 L227.6 1047 Q226.4 1047.1 226.4 1045.8 V1036.6 Q226.4 1035.4 227.6 1035.3 Z"/><path d="M237.6 1035.4 V1046.4 Q237.6 1048.2 235.8 1048.2 L232 1048.4"/><path d="M229.1 1037.6 H233 M229.1 1039.6 H233 M229.1 1041.6 H232.8 M229.1 1043.6 H231.2" stroke-width="1.1"/></g></svg><div class="t" style="left:249px;top:1034.70px;font-size:13.35px;line-height:13.35px;color:#e8e6e0;font-weight:700;">Playbook Catalog</div><div class="t" style="right:37px;text-align:right;top:1033.00px;font-size:13px;line-height:13px;color:#6e6a61;">0 setups tracked</div><svg class="a" style="left:0px;top:0px;" width="1600" height="1100" viewBox="0 0 1600 1100"><path d="M892.5 1100 Q893.8 1096.3 896.8 1096.3 H898.4 Q901.4 1096.3 903 1100 M887 1097.2 L889.6 1100" fill="none" stroke="#8a877e" stroke-width="1.2" stroke-linecap="round"/></svg>
</div></body></html>
